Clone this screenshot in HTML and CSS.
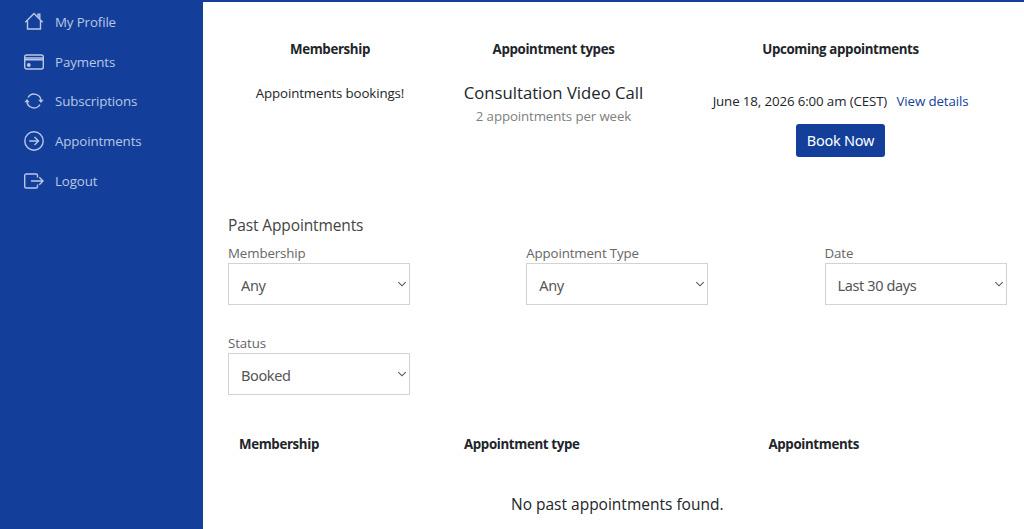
FILE: index.html
```html
<!DOCTYPE html>
<html lang="en">
<head>
  <meta charset="UTF-8" />
  <meta name="viewport" content="width=device-width, initial-scale=1" />
  <title>Appointments</title>
  <link rel="stylesheet" href="styles.css">
</head>
<body>
  <nav class="sidebar">
    <a href="#">
      <svg viewBox="0 0 20 20"><path d="M1.3 10.2 10 1.5l8.7 8.7M3.5 8.5V17h13V8.5M14 5V2.200h1.800v4.500" /></svg>
      <span>My Profile</span>
    </a>
    <a href="#">
      <svg viewBox="0 0 20 20"><rect x=".7" y="3" width="18.6" height="14" rx="2" /><path d="M.7 6h18.6M.7 7.8h18.6" /><circle class="fill" cx="4.8" cy="13" r="1.9" /></svg>
      <span>Payments</span>
    </a>
    <a href="#">
      <svg viewBox="0 0 20 20"><path d="M4 6.500A7 7 0 0 1 17 10M16 13.500A7 7 0 0 1 3 10" /><path class="fill" d="M.4 11.300 3 8l2.700 3.300zM14.300 8.700h5.300L17 12z" /></svg>
      <span>Subscriptions</span>
    </a>
    <a href="#">
      <svg viewBox="0 0 20 20"><circle cx="10" cy="10" r="9.2" /><path d="M5.200 10h9.300M10.500 6l4 4-4 4" /></svg>
      <span>Appointments</span>
    </a>
    <a href="#">
      <svg viewBox="0 0 20 20"><path d="M13.500 6.500v-2A1.500 1.500 0 0 0 12 3H2.200A1.500 1.500 0 0 0 .7 4.500v11A1.500 1.500 0 0 0 2.200 17H12a1.500 1.500 0 0 0 1.500-1.500v-2M7 10h12M15.300 6.200 19 10l-3.700 3.800" /></svg>
      <span>Logout</span>
    </a>
  </nav>

  <main>
    <section class="upcoming">
      <div class="column">
        <h4>Membership</h4>
        <p>Appointments bookings!</p>
      </div>
      <div class="column">
        <h4>Appointment types</h4>
        <p class="type-name">Consultation Video Call</p>
        <p class="type-limit">2 appointments per week</p>
      </div>
      <div class="column">
        <h4>Upcoming appointments</h4>
        <p class="next">June 18, 2026 6:00 am (CEST) <a href="#">View details</a></p>
        <button type="button">Book Now</button>
      </div>
    </section>

    <h3>Past Appointments</h3>
    <form class="filters">
      <label>Membership
        <span class="select"><select><option>Any</option></select><svg viewBox="0 0 10 10"><path d="M1.300 3.200 5 6.800l3.700-3.600" /></svg></span>
      </label>
      <label>Appointment Type
        <span class="select"><select><option>Any</option></select><svg viewBox="0 0 10 10"><path d="M1.300 3.200 5 6.800l3.700-3.600" /></svg></span>
      </label>
      <label>Date
        <span class="select"><select><option>Last 30 days</option></select><svg viewBox="0 0 10 10"><path d="M1.300 3.200 5 6.800l3.700-3.600" /></svg></span>
      </label>
      <label>Status
        <span class="select"><select><option>Booked</option></select><svg viewBox="0 0 10 10"><path d="M1.300 3.200 5 6.800l3.700-3.600" /></svg></span>
      </label>
    </form>

    <div class="past-head">
      <h4>Membership</h4>
      <h4>Appointment type</h4>
      <h4>Appointments</h4>
    </div>
    <p class="empty">No past appointments found.</p>
  </main>
</body>
</html>
```
FILE: styles.css
```css
* {
  box-sizing: border-box;
}
body {
  margin: 0;
  display: flex;
  height: 529px;
  overflow: hidden;
  background-color: #fff;
  color: #212529;
  font-family: "Open Sans", sans-serif;
  font-size: 13.3px;
  letter-spacing: -0.12px;
  line-height: 20px;
}
h3, h4, p {
  margin: 0;
}
h4 {
  font-size: 13.3px;
  font-weight: bold;
  letter-spacing: -0.36px;
}

/* Sidebar */
.sidebar {
  width: 202.5px;
  flex-shrink: 0;
  padding: 2px 24px;
  background-color: #133f9b;
}
.sidebar a {
  display: flex;
  align-items: center;
  gap: 11px;
  height: 39.8px;
  color: #bac7e4;
  text-decoration: none;
}
.sidebar svg {
  width: 20px;
  height: 20px;
  fill: none;
  stroke: #bac7e4;
  stroke-width: 1.4;
}
.sidebar .fill {
  fill: #bac7e4;
  stroke: none;
}

/* Content */
main {
  flex: 1;
  padding: 37px 17.5px 0 25.5px;
  border-top: 2px solid #133f9b;
}
.upcoming {
  display: grid;
  grid-template-columns: 204px 243px 331px;
  height: 175px;
  text-align: center;
}
.upcoming h4 {
  margin-bottom: 24px;
}
.upcoming .type-name {
  font-size: 16.7px;
  letter-spacing: 0;
}
.upcoming .type-limit {
  margin-top: 3px;
  color: #808080;
}
.next {
  padding-top: 8px;
}
.next a {
  margin-left: 6px;
  color: #133f9b;
  text-decoration: none;
}
button {
  width: 89px;
  height: 33px;
  margin-top: 13px;
  padding: 0 0 1px;
  border: none;
  border-radius: 3px;
  background-color: #133f9b;
  color: #fff;
  font-family: "Noto Sans", sans-serif;
  font-size: 14.5px;
  letter-spacing: -0.25px;
}
h3 {
  height: 29px;
  color: #444;
  font-size: 15.5px;
  font-weight: normal;
  line-height: 23px;
}
.filters {
  display: grid;
  grid-template-columns: repeat(3, 182px);
  justify-content: space-between;
  row-gap: 28px;
}
.filters label {
  color: #666;
}
.select {
  display: flex;
  align-items: center;
  height: 42px;
  border: 1px solid #d3d3d3;
}
.select select {
  flex: 1;
  height: 40px;
  padding: 1px 0 0 12px;
  border: none;
  appearance: none;
  background-color: #fff;
  color: #555;
  font-family: "Noto Sans", sans-serif;
  font-size: 14.5px;
  letter-spacing: -0.38px;
}
.select svg {
  width: 10px;
  height: 10px;
  margin-right: 2px;
  fill: none;
  stroke: #555;
  stroke-width: 1.1;
}
.past-head {
  display: grid;
  grid-template-columns: 225px 304.5px 1fr;
  padding: 39px 0 0 11px;
}
.empty {
  padding-top: 38px;
  text-align: center;
  font-size: 15.5px;
  letter-spacing: 0;
  line-height: 24px;
}
```
